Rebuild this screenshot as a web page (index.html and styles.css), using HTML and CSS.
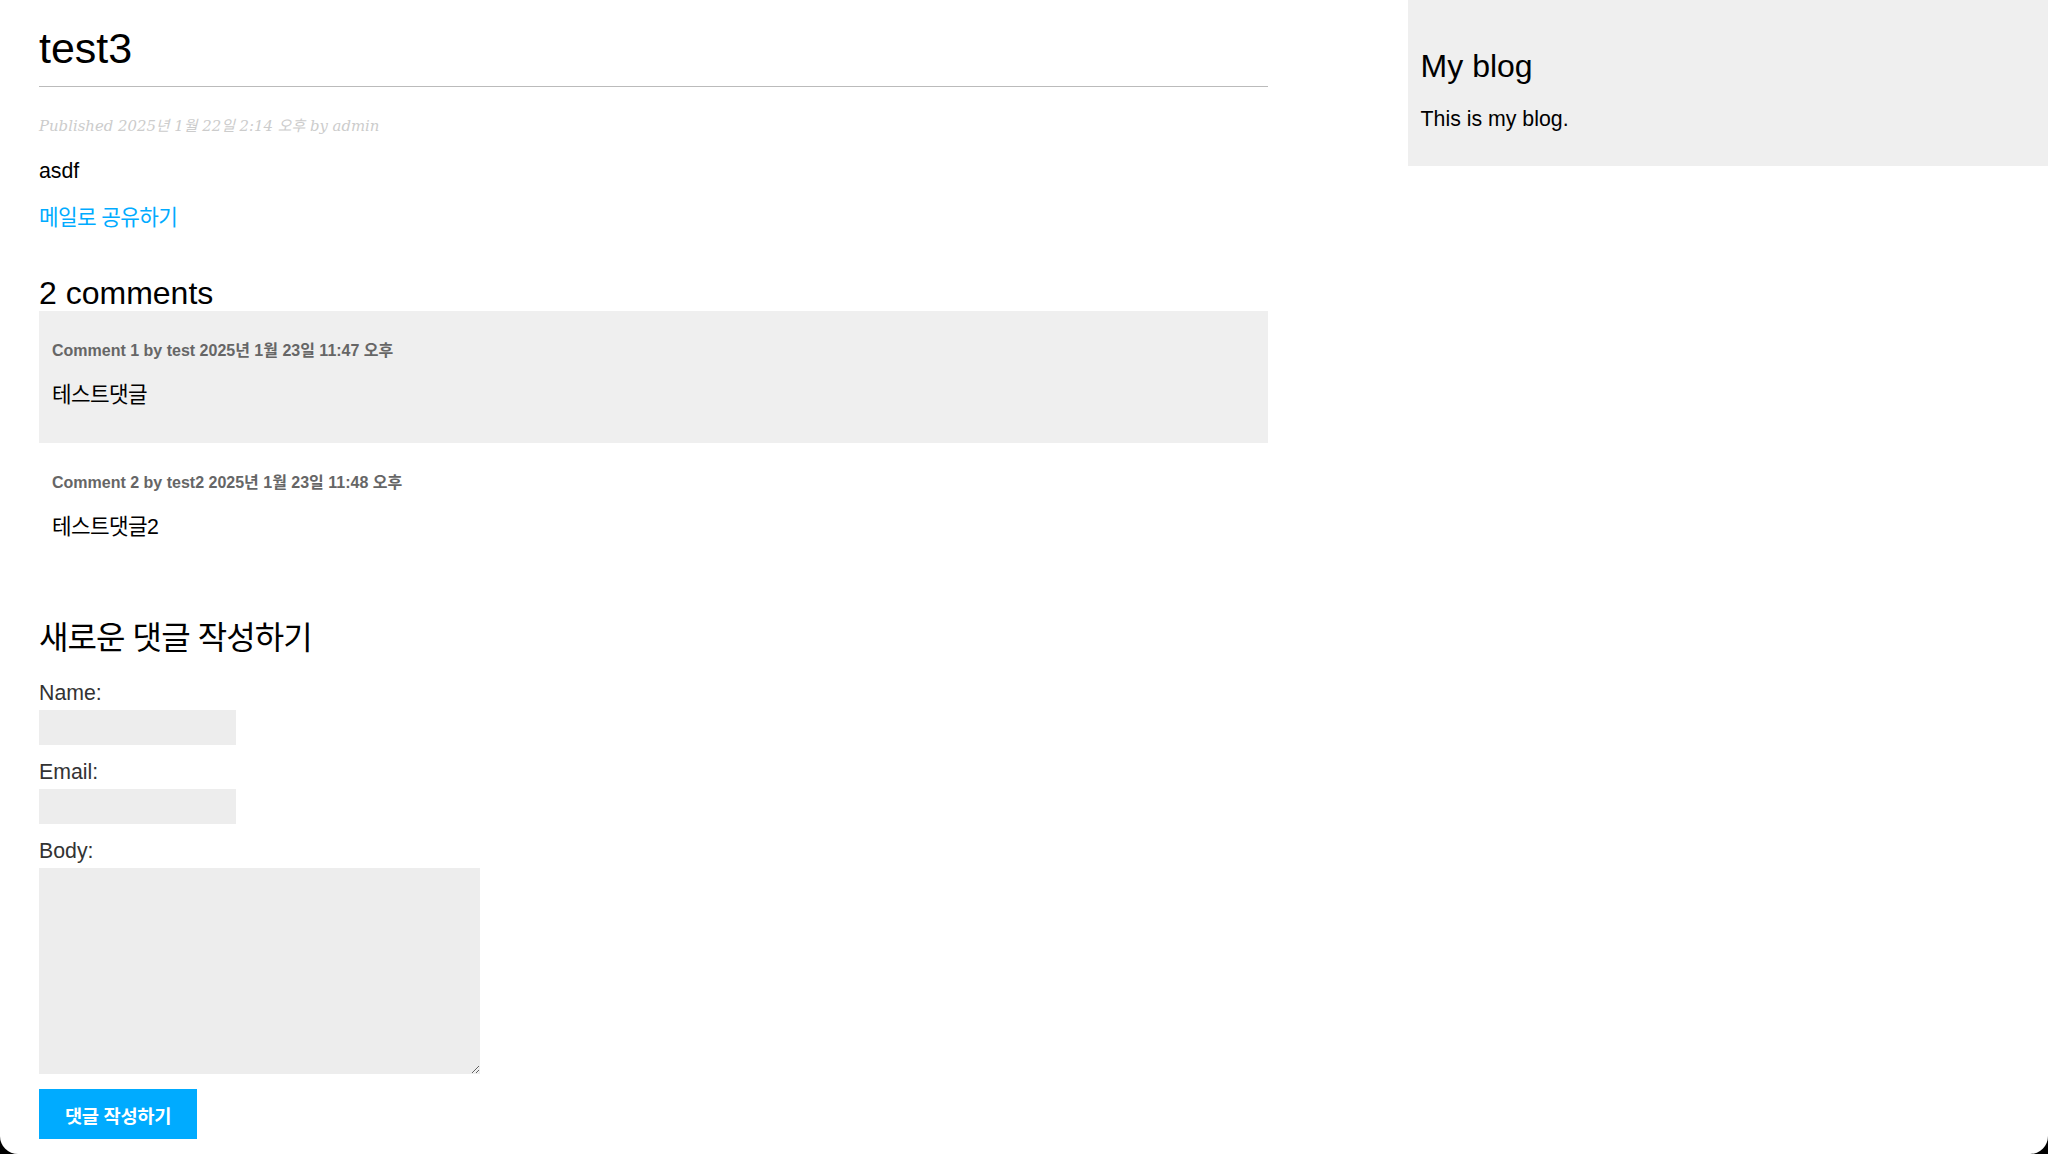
FILE: index.html
```html
<!DOCTYPE html>
<html lang="ko">
<head>
<meta charset="utf-8">
<title>test3</title>
<link rel="stylesheet" href="styles.css">
</head>
<body>
<div class="page">
  <main class="content">
    <h1 class="post-title">test3</h1>
    <p class="date">Published 2025년 1월 22일 2:14 오후 by admin</p>
    <p>asdf</p>
    <p><a class="share-link ko" href="#">메일로 공유하기</a></p>

    <h2 class="section-title">2 comments</h2>
    <div class="comment comment-alt">
      <p class="info">Comment 1 by test 2025년 1월 23일 11:47 오후</p>
      <p class="ko">테스트댓글</p>
    </div>
    <div class="comment">
      <p class="info">Comment 2 by test2 2025년 1월 23일 11:48 오후</p>
      <p class="ko">테스트댓글2</p>
    </div>

    <h2 class="section-title ko-title">새로운 댓글 작성하기</h2>
    <form class="comment-form" action="#" method="post">
      <div class="field">
        <label for="id_name">Name:</label>
        <input class="text-input" type="text" id="id_name" name="name">
      </div>
      <div class="field">
        <label for="id_email">Email:</label>
        <input class="text-input" type="email" id="id_email" name="email">
      </div>
      <div class="field">
        <label for="id_body">Body:</label>
        <textarea class="text-area" id="id_body" name="body"></textarea>
      </div>
      <button class="submit" type="submit">댓글 작성하기</button>
    </form>
  </main>

  <aside class="sidebar">
    <h2 class="sidebar-title">My blog</h2>
    <p>This is my blog.</p>
  </aside>
</div>
</body>
</html>
```

FILE: styles.css
```css
html {
  margin: 0;
  padding: 0;
  background: #000;
}

body {
  margin: 0;
  padding: 0;
  min-height: 100vh;
  background: #fff;
  border-radius: 0 0 18px 18px;
  overflow: hidden;
  font-family: "Liberation Sans", Arial, "Noto Sans CJK KR", sans-serif;
  font-size: 21.3px;
  color: #000;
}

a {
  color: #00abff;
  text-decoration: none;
}

p {
  margin: 22px 0;
  line-height: 25px;
}

.ko {
  letter-spacing: -0.6px;
}

.page {
  display: flex;
  justify-content: space-between;
  align-items: flex-start;
}

.content {
  width: 60%;
  padding-left: 39px;
  flex: 0 0 auto;
}

.post-title {
  font-size: 43px;
  font-weight: normal;
  line-height: 46px;
  margin: 25px 0 28px;
  padding-bottom: 15px;
  border-bottom: 1px solid #bbb;
}

.date {
  font-family: "DejaVu Serif", Georgia, "Noto Sans CJK KR", serif;
  font-style: italic;
  font-size: 14.9px;
  color: #ccc;
  line-height: 22px;
  margin: 16px 0;
}

.section-title {
  font-size: 32px;
  font-weight: normal;
  line-height: 36px;
  margin: 44px 0 0;
}

.ko-title {
  margin-top: 45px;
  letter-spacing: -0.9px;
}

.comment {
  padding: 13px;
}

.comment-alt {
  background: #efefef;
}

.info {
  font-size: 16px;
  font-weight: bold;
  color: #666;
  line-height: 20px;
  margin: 17px 0 16px;
}

.comment-form {
  margin-top: 25px;
}

.field {
  margin-bottom: 15px;
}

.field label {
  display: block;
  color: #333;
  line-height: 24px;
  margin-bottom: 5px;
}

.text-input,
.text-area {
  display: block;
  box-sizing: border-box;
  margin: 0;
  border: 0;
  background: #ededed;
  padding: 8px 13px;
  font-family: inherit;
  font-size: 16px;
}

.text-input {
  width: 197px;
  height: 35px;
}

.text-area {
  width: 441px;
  height: 206px;
  resize: both;
}

.submit {
  display: block;
  width: 158px;
  height: 50px;
  margin: 0;
  padding: 0;
  border: 0;
  background: #00abff;
  color: #fff;
  font-family: inherit;
  font-size: 18.7px;
  font-weight: bold;
  letter-spacing: -0.3px;
  cursor: pointer;
}

.sidebar {
  width: 30%;
  padding: 13px;
  background: #efefef;
  flex: 0 0 auto;
}

.sidebar-title {
  font-size: 32px;
  font-weight: normal;
  line-height: 36px;
  margin: 35px 0 0;
}

.sidebar p {
  margin: 23px 0 21px;
}
```
